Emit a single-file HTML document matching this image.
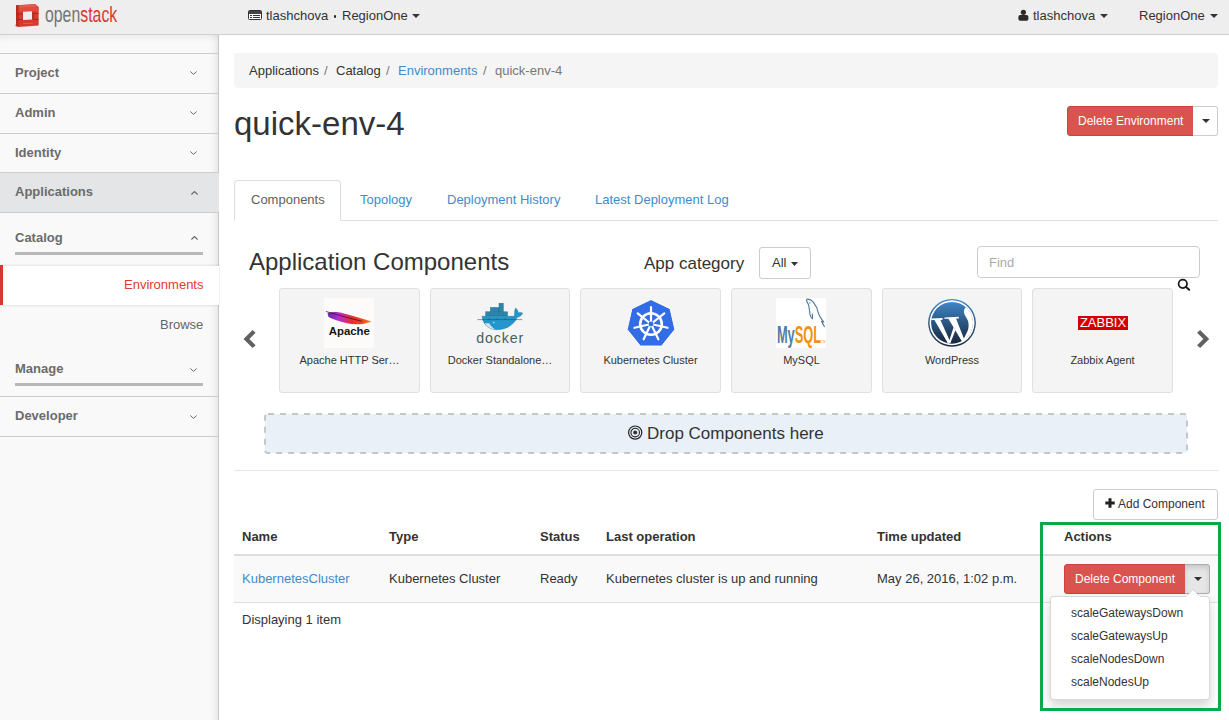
<!DOCTYPE html>
<html><head><meta charset="utf-8">
<style>
*{box-sizing:border-box;margin:0;padding:0}
html,body{width:1229px;height:720px;overflow:hidden;background:#fff;font-family:"Liberation Sans",sans-serif;font-size:13px;color:#333}
.a{position:absolute;white-space:nowrap}
#hdr{position:absolute;left:0;top:0;width:1229px;height:35px;background:#eeeeee;border-bottom:1px solid #cfcfcf}
#side{position:absolute;left:0;top:35px;width:219px;height:685px;background:#f9f9f9;border-right:1px solid #c8c8c8;box-shadow:inset -7px 0 7px -5px rgba(0,0,0,.09), inset 0 7px 7px -5px rgba(0,0,0,.07)}
.sline{position:absolute;left:0;width:218px;height:1px;background:#cccccc}
.shd{position:absolute;left:15px;font-weight:bold;color:#6b6b6b;font-size:13px}
.chev{position:absolute;width:7px;height:7px}
.bar{position:absolute;left:15px;width:188px;height:3px;background:#b8b8b8}
.tile{position:absolute;top:288px;width:140px;height:105px;background:#f4f4f4;border:1px solid #e0e0e0;border-radius:3px}
.tlab{position:absolute;left:0;right:0;top:65px;text-align:center;font-size:11px;color:#333}
.th{position:absolute;top:530px;font-weight:bold;color:#333}
.td{position:absolute;top:572px;color:#333}
</style></head><body>
<div id="hdr">
 <svg class="a" style="left:14px;top:2px" width="28" height="28" viewBox="0 0 28 28">
  <path d="M0.5 23.5 L3 25.5 L3 21 Z" fill="#8a8a8a" opacity=".55"/>
  <path d="M2.2 3.2 L21.2 2.2 L24.6 5 L24.6 23.6 L4.2 25 L2 23.4 Z" fill="#d63a2c"/>
  <path d="M2.2 3.2 L21.2 2.2 L24.6 5 L24.5 9 L2.2 9.8 Z" fill="#e24a3f"/>
  <path d="M2 3.4 L4.6 3.2 L4.6 25 L2 23.4 Z" fill="#b92b20"/>
  <path d="M4.6 3.4 L21 2.6 L23.5 4.8 L5.4 5.6 Z" fill="#e8685e" opacity=".6"/>
  <path d="M9 9.8 L18.2 9.2 L18.3 17.5 L9 17.9 Z" fill="#ececec"/>
  <path d="M18.2 9.2 L19.6 10.4 L19.6 17.5 L18.3 17.5 Z" fill="#a92419"/>
  <path d="M2.2 12 L9 11.9 M19.6 11.6 L24.6 11.5 M2.2 17.6 L9 17.6 M19.6 17.5 L24.6 17.4" stroke="#a52319" stroke-width="0.9"/>
  <path d="M9 21.5 L19 21.3" stroke="#e77b72" stroke-width="0.5"/>
 </svg>
 <div class="a" style="left:45px;top:2px;font-size:22px;letter-spacing:0;transform:scaleX(0.72);transform-origin:0 0;color:#747474">open<span style="color:#d9392e">stack</span></div>
 <svg class="a" style="left:248px;top:10px" width="14" height="10" viewBox="0 0 14 10"><rect x="0.5" y="0.5" width="13" height="9" rx="1" fill="#fff" stroke="#333"/><rect x="1" y="1" width="12" height="3" fill="#444"/><rect x="5" y="5" width="7" height="1" fill="#333"/><rect x="5" y="7" width="7" height="1" fill="#333"/><rect x="2" y="5" width="2" height="1" fill="#333"/><rect x="2" y="7" width="2" height="1" fill="#333"/></svg>
 <div class="a" style="left:266px;top:8px;color:#333">tlashchova</div><div class="a" style="left:333.7px;top:15.4px;width:2.6px;height:2.6px;border-radius:50%;background:#222"></div><div class="a" style="left:342px;top:8px;color:#333">RegionOne</div>
 <svg class="a" style="left:412px;top:14px" width="8" height="4"><path d="M0 0H8L4 4Z" fill="#333"/></svg>
 <svg class="a" style="left:1018px;top:9px" width="11" height="12" viewBox="0 0 11 12"><circle cx="5.4" cy="3.3" r="2.6" fill="#2a2a2a"/><rect x="0.4" y="6" width="10" height="5.7" rx="1.8" fill="#2a2a2a"/></svg>
 <div class="a" style="left:1033px;top:8px;color:#333">tlashchova</div>
 <svg class="a" style="left:1100px;top:14px" width="8" height="4"><path d="M0 0H8L4 4Z" fill="#333"/></svg>
 <div class="a" style="left:1139px;top:8px;color:#333">RegionOne</div>
 <svg class="a" style="left:1210px;top:14px" width="8" height="4"><path d="M0 0H8L4 4Z" fill="#333"/></svg>
</div>
<div id="side">
 <div class="sline" style="top:18px"></div>
 <div class="shd" style="top:30px">Project</div><svg class="a" style="left:190px;top:36px" width="7" height="4" viewBox="0 0 7 4"><path d="M0.4 0.5L3.5 3.4L6.6 0.5" fill="none" stroke="#6a6a6a" stroke-width="1"/></svg>
 <div class="sline" style="top:58px"></div>
 <div class="shd" style="top:70px">Admin</div><svg class="a" style="left:190px;top:76px" width="7" height="4" viewBox="0 0 7 4"><path d="M0.4 0.5L3.5 3.4L6.6 0.5" fill="none" stroke="#6a6a6a" stroke-width="1"/></svg>
 <div class="sline" style="top:98px"></div>
 <div class="shd" style="top:110px">Identity</div><svg class="a" style="left:190px;top:116px" width="7" height="4" viewBox="0 0 7 4"><path d="M0.4 0.5L3.5 3.4L6.6 0.5" fill="none" stroke="#6a6a6a" stroke-width="1"/></svg>
 <div class="sline" style="top:137px"></div>
 <div class="a" style="left:0;top:138px;width:219px;height:39px;background:#e4e5e7"></div>
 <div class="shd" style="top:149px">Applications</div><svg class="a" style="left:191px;top:156px" width="7" height="4" viewBox="0 0 7 4"><path d="M0.4 3.5L3.5 0.6L6.6 3.5" fill="none" stroke="#666" stroke-width="1.15"/></svg>
 <div class="sline" style="top:177px"></div>
 <div class="shd" style="top:195px">Catalog</div><svg class="a" style="left:191px;top:201px" width="7" height="4" viewBox="0 0 7 4"><path d="M0.4 3.5L3.5 0.6L6.6 3.5" fill="none" stroke="#666" stroke-width="1.15"/></svg>
 <div class="bar" style="top:217px"></div>
 <div class="a" style="left:0;top:231px;width:219px;height:39px;background:#fff;box-shadow:0 -1px 2px rgba(0,0,0,.09), 0 1px 2px rgba(0,0,0,.09)"></div>
 <div class="a" style="left:0;top:230px;width:3px;height:40px;background:#d8372b"></div>
 <div class="a" style="left:124px;top:242px;color:#dc3c2b">Environments</div>
 <div class="a" style="left:160px;top:282px;color:#666">Browse</div>
 <div class="shd" style="top:326px">Manage</div><svg class="a" style="left:190px;top:333px" width="7" height="4" viewBox="0 0 7 4"><path d="M0.4 0.5L3.5 3.4L6.6 0.5" fill="none" stroke="#6a6a6a" stroke-width="1"/></svg>
 <div class="bar" style="top:348px"></div>
 <div class="sline" style="top:361px"></div>
 <div class="shd" style="top:373px">Developer</div><svg class="a" style="left:190px;top:380px" width="7" height="4" viewBox="0 0 7 4"><path d="M0.4 0.5L3.5 3.4L6.6 0.5" fill="none" stroke="#6a6a6a" stroke-width="1"/></svg>
 <div class="sline" style="top:401px"></div>
</div>
<div id="main">
 <div class="a" style="left:234px;top:53px;width:984px;height:35px;background:#f5f5f5;border-radius:4px"></div>
 <div class="a" style="left:249px;top:63px;color:#333">Applications</div>
 <div class="a" style="left:324px;top:63px;color:#777">/</div>
 <div class="a" style="left:336px;top:63px;color:#333">Catalog</div>
 <div class="a" style="left:386px;top:63px;color:#777">/</div>
 <div class="a" style="left:398px;top:63px;color:#428bca">Environments</div>
 <div class="a" style="left:483px;top:63px;color:#777">/</div>
 <div class="a" style="left:495px;top:63px;color:#777">quick-env-4</div>
 <div class="a" style="left:234px;top:105px;font-size:33px;color:#333">quick-env-4</div>
 <div class="a" style="left:1067px;top:106px;width:127px;height:30px;background:#d9534f;border:1px solid #d43f3a;border-radius:3px 0 0 3px"></div>
 <div class="a" style="left:1078px;top:114px;color:#fff;font-size:12px">Delete Environment</div>
 <div class="a" style="left:1193px;top:106px;width:25px;height:30px;background:#fff;border:1px solid #ccc;border-left:0;border-radius:0 3px 3px 0"></div>
 <svg class="a" style="left:1202px;top:119px" width="8" height="4"><path d="M0 0H8L4 4Z" fill="#333"/></svg>
 <div class="a" style="left:234px;top:220px;width:984px;height:1px;background:#dddddd"></div>
 <div class="a" style="left:234px;top:180px;width:107px;height:41px;background:#fff;border:1px solid #ddd;border-bottom-color:#fff;border-radius:4px 4px 0 0"></div>
 <div class="a" style="left:251px;top:192px;color:#606060">Components</div>
 <div class="a" style="left:360px;top:192px;color:#428bca">Topology</div>
 <div class="a" style="left:447px;top:192px;color:#428bca">Deployment History</div>
 <div class="a" style="left:595px;top:192px;color:#428bca">Latest Deployment Log</div>

 <div class="a" style="left:249px;top:248px;font-size:24px;color:#333">Application Components</div>
 <div class="a" style="left:644px;top:254px;font-size:17px;color:#333">App category</div>
 <div class="a" style="left:759px;top:247px;width:52px;height:32px;background:#fff;border:1px solid #ccc;border-radius:3px"></div>
 <div class="a" style="left:772px;top:255px;color:#333">All</div>
 <svg class="a" style="left:791px;top:262px" width="7" height="4"><path d="M0 0H7L3.5 4Z" fill="#333"/></svg>
 <div class="a" style="left:977px;top:246px;width:223px;height:32px;background:#fff;border:1px solid #ccc;border-radius:4px"></div>
 <div class="a" style="left:989px;top:255px;color:#aaa">Find</div>
 <svg class="a" style="left:1176px;top:277px" width="16" height="16" viewBox="0 0 16 16"><circle cx="6.8" cy="6.8" r="4.2" fill="none" stroke="#1a1a1a" stroke-width="1.75"/><path d="M9.8 9.8L13.2 12.8" stroke="#1a1a1a" stroke-width="2" stroke-linecap="round"/></svg>
 <svg class="a" style="left:240px;top:326px" width="20" height="26" viewBox="240 326 20 26"><polygon points="243.5,339 252.6,329.9 255.6,332.8 249.4,339 255.6,345.2 252.6,348.1" fill="#616161"/></svg>
 <svg class="a" style="left:1193px;top:326px" width="20" height="26" viewBox="1193 326 20 26"><polygon points="1209.2,339 1200.1,329.9 1197.1,332.8 1203.3,339 1197.1,345.2 1200.1,348.1" fill="#616161"/></svg>
 <div class="tile" style="left:279px;width:141px"><div class="tlab">Apache HTTP Ser&hellip;</div></div>
<div class="tile" style="left:430px;width:140px"><div class="tlab">Docker Standalone&hellip;</div></div>
<div class="tile" style="left:580px;width:141px"><div class="tlab">Kubernetes Cluster</div></div>
<div class="tile" style="left:731px;width:141px"><div class="tlab">MySQL</div></div>
<div class="tile" style="left:882px;width:140px"><div class="tlab">WordPress</div></div>
<div class="tile" style="left:1032px;width:141px"><div class="tlab">Zabbix Agent</div></div>

<div class="a" style="left:324px;top:298px;width:50px;height:50px"><svg width="50" height="50" viewBox="0 0 50 50"><defs><linearGradient id="fth" x1="0" y1="0" x2="1" y2="0"><stop offset="0" stop-color="#5e2a9e"/><stop offset="0.25" stop-color="#b62ccf"/><stop offset="0.55" stop-color="#ee2a2f"/><stop offset="0.8" stop-color="#f04a1f"/><stop offset="1" stop-color="#f7941d"/></linearGradient></defs>
<rect width="50" height="50" fill="#fdfbfa"/>
<path d="M3.6 15 C8 13.4 13 13.6 20 15.4 C30 18 39 20.6 47.6 23.4 C40 26.4 31 27.2 23 25.2 C15 23.4 9 21.4 5 19.3 C4 17.8 3.7 16.4 3.6 15 Z" fill="url(#fth)"/>
<path d="M1.8 13.4 C10 15.8 22 19.3 38 23.3" fill="none" stroke="#2a0c28" stroke-width="0.7"/>
<text x="25.3" y="36.6" text-anchor="middle" font-family="Liberation Sans" font-weight="bold" font-size="11.4" fill="#151515">Apache</text></svg></div>
<div class="a" style="left:474px;top:298px;width:50px;height:50px"><svg width="50" height="50" viewBox="0 0 50 50">
<g fill="#2a86ad" stroke="#21708f" stroke-width="0.45">
<rect x="11.7" y="13.8" width="4.38" height="4.3"/><rect x="16.08" y="13.8" width="4.38" height="4.3"/><rect x="20.46" y="13.8" width="4.38" height="4.3"/><rect x="24.84" y="13.8" width="4.38" height="4.3"/><rect x="29.22" y="13.8" width="4.38" height="4.3"/>
<rect x="16.4" y="9.5" width="4.3" height="4.3"/><rect x="20.7" y="9.5" width="4.3" height="4.3"/><rect x="25" y="9.5" width="4.3" height="4.3"/>
<rect x="25" y="5.2" width="4.3" height="4.3"/>
</g>
<path d="M8 18.3 L40.3 18.3 C40.8 15.5 40.2 12.5 41.6 10 C43.2 11.3 44.2 13 44.2 14.9 C45.8 14.2 47.5 14.4 48.7 15.1 C47.6 17.6 45.6 18.9 43.2 19.6 C39.6 27.6 31.2 31.8 22.6 31.7 C14.2 31.5 8.8 26 8 18.3 Z" fill="#2397cc" stroke="#1b6e92" stroke-width="0.4"/>
<path d="M10.8 25.2 C12.8 28.8 16.4 31 21.2 31.5 C18.5 29.5 16.5 27.4 15.2 25.2 Z" fill="#cfe4ea"/>
<path d="M3.5 21.6 L48.3 21.6" stroke="#2f4750" stroke-width="0.55"/>
<path d="M14 21.6 l1.2 -0.9 l1.2 0.9 M22 21.6 l1.2 -0.9 l1.2 0.9 M30 21.6 l1.2 -0.9 l1.2 0.9" fill="none" stroke="#2f4750" stroke-width="0.5"/>
<circle cx="19.8" cy="24.4" r="0.75" fill="#dfe9ee"/>
<text x="2.3" y="44.8" font-family="Liberation Sans" font-size="14.2" fill="#4a5d64" textLength="47" lengthAdjust="spacing">docker</text></svg></div>
<div class="a" style="left:626px;top:298px;width:50px;height:50px"><svg width="50" height="50" viewBox="0 0 50 50"><polygon points="25.00,1.50 44.15,10.72 48.89,31.45 35.63,48.07 14.37,48.07 1.11,31.45 5.85,10.72" fill="#326de6" stroke="#fff" stroke-width="1" stroke-linejoin="round"/>
<circle cx="25" cy="26" r="10.8" fill="none" stroke="#fff" stroke-width="2.6"/><line x1="25.00" y1="26.00" x2="25.00" y2="9.00" stroke="#fff" stroke-width="2.2" stroke-linecap="round"/><line x1="25.00" y1="26.00" x2="38.29" y2="15.40" stroke="#fff" stroke-width="2.2" stroke-linecap="round"/><line x1="25.00" y1="26.00" x2="41.57" y2="29.78" stroke="#fff" stroke-width="2.2" stroke-linecap="round"/><line x1="25.00" y1="26.00" x2="32.38" y2="41.32" stroke="#fff" stroke-width="2.2" stroke-linecap="round"/><line x1="25.00" y1="26.00" x2="17.62" y2="41.32" stroke="#fff" stroke-width="2.2" stroke-linecap="round"/><line x1="25.00" y1="26.00" x2="8.43" y2="29.78" stroke="#fff" stroke-width="2.2" stroke-linecap="round"/><line x1="25.00" y1="26.00" x2="11.71" y2="15.40" stroke="#fff" stroke-width="2.2" stroke-linecap="round"/><circle cx="25" cy="26" r="2.4" fill="#326de6"/></svg></div>
<div class="a" style="left:776px;top:298px;width:50px;height:50px"><svg width="50" height="50" viewBox="0 0 50 50"><rect width="50" height="50" fill="#fff"/>
<path d="M30.3 1.3 C32.5 0.8 35.5 2 37.3 4.2 C40.2 7.8 41.8 11.8 42.6 15.6 C43.5 18.8 45.8 21.6 47.8 24 C47 24 46.2 23.6 45.6 23.2 C46.5 25.2 47.4 27.2 48.6 28.8" fill="none" stroke="#4e7b96" stroke-width="1.15" stroke-linejoin="round"/>
<path d="M30.3 1.3 C30.8 3.6 31.6 5.2 32.6 7 C33.3 10.2 33.6 13.4 34 16.4 C34.4 18.6 35.3 20 36.5 20.8 C36.6 19.2 36.6 17.4 36.2 15.6 M33 5 l1.4 -0.3" fill="none" stroke="#4e7b96" stroke-width="1.15" stroke-linejoin="round"/>
<g transform="translate(0.9,44.8) scale(0.535,1)"><text x="0" y="0" font-family="Liberation Sans" font-weight="bold" font-size="24" fill="#4f7ea3">My<tspan fill="#f29111">SQL</tspan></text></g>
<text x="45.6" y="44.6" font-family="Liberation Sans" font-size="2.6" fill="#f29111">TM</text></svg></div>
<div class="a" style="left:927px;top:298px;width:50px;height:50px"><svg width="50" height="50" viewBox="0 0 50 50"><defs><linearGradient id="wpg" x1="0" y1="0" x2="0" y2="1"><stop offset="0" stop-color="#3f86c8"/><stop offset="1" stop-color="#18263a"/></linearGradient><linearGradient id="wpo" x1="0" y1="0" x2="0" y2="1"><stop offset="0" stop-color="#3b88cb"/><stop offset="1" stop-color="#1a2940"/></linearGradient><clipPath id="wpc"><circle cx="25" cy="24.8" r="21"/></clipPath></defs>
<circle cx="25" cy="24.8" r="23.9" fill="url(#wpo)"/>
<circle cx="25" cy="24.8" r="22.5" fill="#fff"/>
<circle cx="25" cy="24.8" r="20.9" fill="url(#wpg)"/>
<g clip-path="url(#wpc)" fill="#fff">
<path d="M3.5 20.6 L15.6 20.1 L15.6 21.7 L13.4 21.9 L23.6 44.6 L21.2 45.8 L7.4 21.9 L3.5 21.9 Z"/>
<path d="M17.4 19.4 L31.8 18.8 L31.8 20.4 L29 20.6 L37.6 42.2 L35 43.4 L21.4 20.7 L17.4 20.7 Z"/>
<path d="M21.2 45.8 L23.6 44.6 L28.4 32.2 L26.6 29.2 Z"/>
<path d="M35.4 43.6 C41 40 47.5 33 47.5 25 C47.5 18 44 12.5 39.2 9 C37.4 10.2 36.8 12.2 37 14.5 C37.4 17.5 39.8 19.8 40.8 22.4 C41.8 25.2 42 28.6 40.8 32.4 Z"/>
</g>
</svg></div>
<div class="a" style="left:1078px;top:298px;width:50px;height:50px"><svg width="50" height="50" viewBox="0 0 50 50"><rect x="0" y="18" width="50" height="14" fill="#d40000"/>
<text x="25" y="29.2" text-anchor="middle" font-family="Liberation Sans" font-size="13" fill="#fff" letter-spacing="0">ZABBIX</text></svg></div>
 <svg class="a" style="left:264px;top:413px" width="924" height="41"><rect x="1" y="1" width="922" height="39" rx="3" fill="#e9f0f8" stroke="#c4c6c8" stroke-width="2" stroke-dasharray="6 6"/></svg>
 <svg class="a" style="left:627px;top:425px" width="16" height="16" viewBox="0 0 16 16"><circle cx="8.2" cy="7.6" r="6.6" fill="none" stroke="#222" stroke-width="1.2"/><circle cx="8.2" cy="7.6" r="4.3" fill="none" stroke="#222" stroke-width="1.1"/><circle cx="8.2" cy="7.6" r="2" fill="#333"/></svg>
 <div class="a" style="left:647px;top:424px;font-size:17px;color:#333">Drop Components here</div>
 <div class="a" style="left:234px;top:470px;width:984px;height:1px;background:#e5e5e5"></div>

 <div class="a" style="left:1093px;top:489px;width:125px;height:31px;background:#fff;border:1px solid #ccc;border-radius:3px"></div>
 <svg class="a" style="left:1105px;top:498px" width="10" height="10" viewBox="0 0 10 10"><path d="M5 0.3V9.7M0.3 5H9.7" stroke="#222" stroke-width="3"/></svg>
 <div class="a" style="left:1118px;top:497px;color:#333;font-size:12px">Add Component</div>

 <div class="th" style="top:529px;left:242px">Name</div>
 <div class="th" style="top:529px;left:389px">Type</div>
 <div class="th" style="top:529px;left:540px">Status</div>
 <div class="th" style="top:529px;left:606px">Last operation</div>
 <div class="th" style="top:529px;left:877px">Time updated</div>
 <div class="th" style="top:529px;left:1064px">Actions</div>
 <div class="a" style="left:234px;top:554px;width:984px;height:2px;background:#dddddd"></div>
 <div class="a" style="left:234px;top:556px;width:984px;height:46px;background:#f9f9f9"></div>
 <div class="a" style="left:234px;top:602px;width:984px;height:1px;background:#dddddd"></div>
 <div class="td" style="top:571px;left:242px;color:#428bca">KubernetesCluster</div>
 <div class="td" style="top:571px;left:389px">Kubernetes Cluster</div>
 <div class="td" style="top:571px;left:540px">Ready</div>
 <div class="td" style="top:571px;left:606px">Kubernetes cluster is up and running</div>
 <div class="td" style="top:571px;left:877px">May 26, 2016, 1:02 p.m.</div>
 <div class="a" style="left:242px;top:612px">Displaying 1 item</div>

 <div class="a" style="left:1064px;top:564px;width:122px;height:30px;background:#d9534f;border:1px solid #d43f3a;border-radius:3px 0 0 3px"></div>
 <div class="a" style="left:1075px;top:572px;color:#fff;font-size:12px">Delete Component</div>
 <div class="a" style="left:1185px;top:564px;width:25px;height:30px;background:#e6e6e6;border:1px solid #adadad;border-left:0;border-radius:0 3px 3px 0;box-shadow:inset 0 3px 5px rgba(0,0,0,.125)"></div>
 <svg class="a" style="left:1193.5px;top:577px" width="8" height="4"><path d="M0 0H8L4 4Z" fill="#333"/></svg>
 <div class="a" style="left:1050px;top:596px;width:160px;height:104px;background:#fff;border:1px solid rgba(0,0,0,.15);border-radius:4px;box-shadow:0 6px 12px rgba(0,0,0,.175)"></div>
 <svg class="a" style="left:1186px;top:589px" width="14" height="8"><path d="M0 7.5L7 0.5L14 7.5" fill="#fff" stroke="rgba(0,0,0,.12)" stroke-width="1"/><rect x="0" y="7" width="14" height="1" fill="#fff"/></svg>
 <div class="a" style="left:1071px;top:606px;font-size:12px">scaleGatewaysDown</div>
 <div class="a" style="left:1071px;top:629px;font-size:12px">scaleGatewaysUp</div>
 <div class="a" style="left:1071px;top:652px;font-size:12px">scaleNodesDown</div>
 <div class="a" style="left:1071px;top:675px;font-size:12px">scaleNodesUp</div>
 <div class="a" style="left:1040px;top:522px;width:181px;height:189px;border:3px solid #0ca94a"></div>
</div>
</body></html>
